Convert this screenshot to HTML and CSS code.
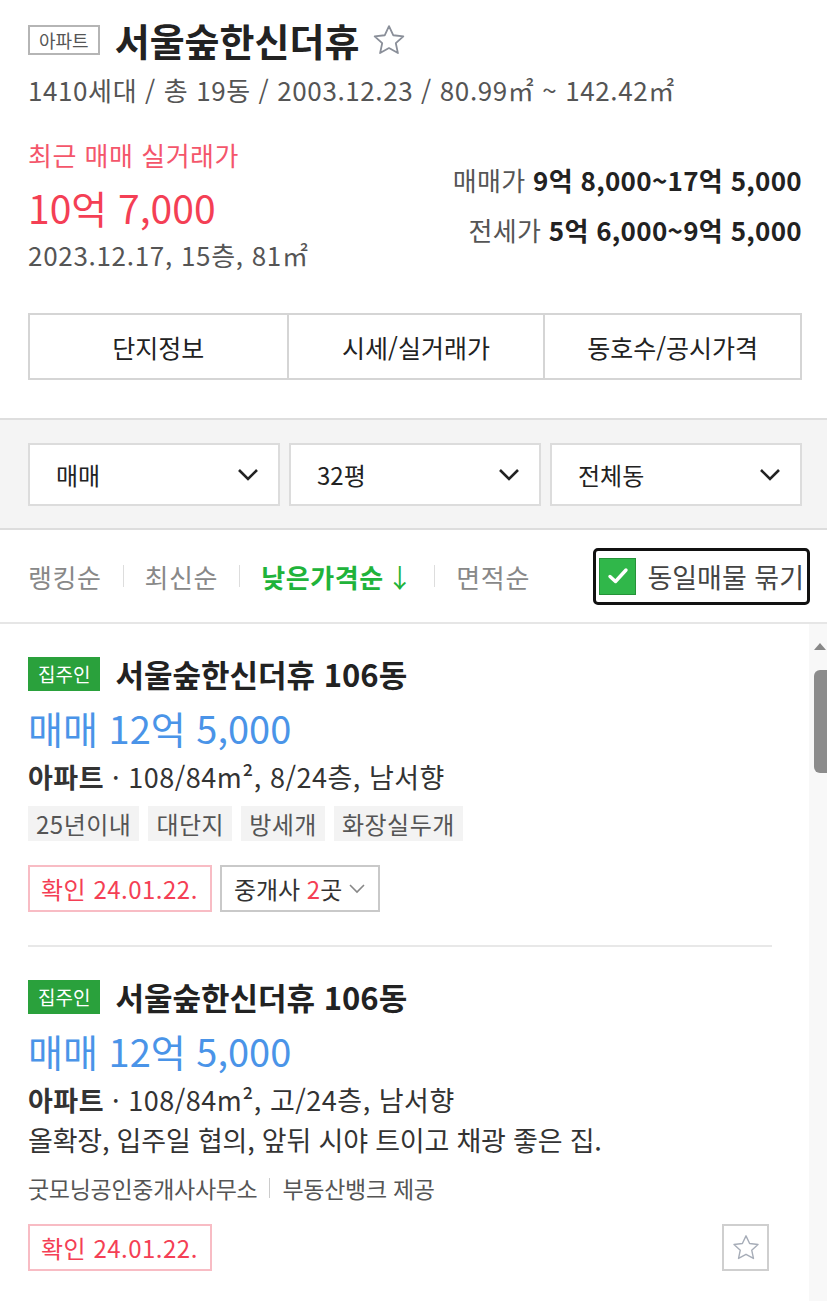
FILE: index.html
```html
<!DOCTYPE html>
<html lang="ko">
<head>
  <meta charset="UTF-8"/>
  <meta name="viewport" content="width=device-width, initial-scale=1"/>
  <title>서울숲한신더휴</title>
  <link rel="stylesheet" href="styles.css">
</head>
<body>
  <div class="complex">
    <div class="complex-title">
      <span class="type-badge">아파트</span>
      <h1>서울숲한신더휴</h1>
      <svg class="fav" width="34" height="32" viewBox="0 0 24 23">
        <path d="M12 1.5l3.1 6.6 7.2.8-5.4 4.9 1.5 7.1L12 17.3l-6.4 3.6 1.5-7.1L1.7 8.9l7.2-.8z" fill="none" stroke="#8a8f99" stroke-width="1.3" stroke-linejoin="round"/>
      </svg>
    </div>
    <p class="complex-meta">1410세대 / 총 19동 / 2003.12.23 / 80.99㎡ ~ 142.42㎡</p>

    <div class="complex-price">
      <div class="recent">
        <div class="recent-label">최근 매매 실거래가</div>
        <div class="recent-price">10억 7,000</div>
        <div class="recent-info">2023.12.17, 15층, 81㎡</div>
      </div>
      <div class="ranges">
        <div class="range"><span class="range-label">매매가</span> <strong>9억 8,000~17억 5,000</strong></div>
        <div class="range"><span class="range-label">전세가</span> <strong>5억 6,000~9억 5,000</strong></div>
      </div>
    </div>

    <!-- Complex tabs -->
    <div class="tabs">
      <div class="tab">단지정보</div>
      <div class="tab">시세/실거래가</div>
      <div class="tab">동호수/공시가격</div>
    </div>
  </div>

  <div class="filters">
    <div class="select">매매 <svg width="22" height="14" viewBox="0 0 22 14"><path d="M2 2l9 9 9-9" fill="none" stroke="#222" stroke-width="2.6"/></svg></div>
    <div class="select">32평 <svg width="22" height="14" viewBox="0 0 22 14"><path d="M2 2l9 9 9-9" fill="none" stroke="#222" stroke-width="2.6"/></svg></div>
    <div class="select">전체동 <svg width="22" height="14" viewBox="0 0 22 14"><path d="M2 2l9 9 9-9" fill="none" stroke="#222" stroke-width="2.6"/></svg></div>
  </div>

  <div class="sorts">
    <span class="sort">랭킹순</span>
    <span class="sort-sep"></span>
    <span class="sort">최신순</span>
    <span class="sort-sep"></span>
    <span class="sort active">낮은가격순<span class="arrow">↓</span></span>
    <span class="sort-sep"></span>
    <span class="sort">면적순</span>
    <label class="group-check">
      <span class="checkbox">
        <svg width="24" height="20" viewBox="0 0 24 20"><path d="M4 10.5l5.5 5L20 4" fill="none" stroke="#fff" stroke-width="3.4" stroke-linecap="round" stroke-linejoin="round"/></svg>
      </span>
      동일매물 묶기
    </label>
  </div>

  <div class="list-wrap">
    <div class="list">
      <div class="item">
        <div class="item-title"><span class="owner-badge">집주인</span>서울숲한신더휴 106동</div>
        <div class="item-price">매매 12억 5,000</div>
        <div class="item-spec"><strong>아파트</strong> · 108/84m², 8/24층, 남서향</div>
        <div class="tags">
          <span class="tag">25년이내</span>
          <span class="tag">대단지</span>
          <span class="tag">방세개</span>
          <span class="tag">화장실두개</span>
        </div>
        <div class="item-foot">
          <span class="confirm">확인 24.01.22.</span>
          <span class="agents"><span>중개사 <em>2</em>곳</span><svg width="18" height="11" viewBox="0 0 18 11"><path d="M2 2l7 7 7-7" fill="none" stroke="#888" stroke-width="1.6"/></svg></span>
        </div>
      </div>

      <div class="item">
        <div class="item-title"><span class="owner-badge">집주인</span>서울숲한신더휴 106동</div>
        <div class="item-price">매매 12억 5,000</div>
        <div class="item-spec"><strong>아파트</strong> · 108/84m², 고/24층, 남서향</div>
        <div class="item-desc">올확장, 입주일 협의, 앞뒤 시야 트이고 채광 좋은 집.</div>
        <div class="item-agency">굿모닝공인중개사사무소<span class="agency-sep"></span>부동산뱅크 제공</div>
        <div class="item-foot">
          <span class="confirm">확인 24.01.22.</span>
          <span class="star-btn">
            <svg width="28" height="27" viewBox="0 0 24 23"><path d="M12 1.5l3.1 6.6 7.2.8-5.4 4.9 1.5 7.1L12 17.3l-6.4 3.6 1.5-7.1L1.7 8.9l7.2-.8z" fill="none" stroke="#a7adb8" stroke-width="1.2" stroke-linejoin="round"/></svg>
          </span>
        </div>
      </div>
    </div>

    <div class="scrollbar">
      <span class="scroll-up"></span>
      <span class="scroll-thumb"></span>
    </div>
  </div>
</body>
</html>
```

FILE: styles.css
```css
body{
  margin: 0;
  font-family: "Noto Sans CJK KR", "Noto Sans", sans-serif;
  color: #222;
  background: #fff;
  width: 827px;
  overflow: hidden;
}
.complex{
  padding: 18px 25px 38px 28px;
  border-bottom: 2px solid #dedede;
}
.complex-title{
  display: flex;
  align-items: center;
  height: 44px;
}
.type-badge{
  border: 2px solid #b5b5b5;
  color: #555;
  font-size: 18px;
  line-height: 26px;
  padding: 0 9px;
  margin-right: 15px;
}
h1{
  margin: 0;
  font-size: 38px;
  font-weight: 700;
  line-height: 44px;
}
.fav{
  margin-left: 13px;
}
.complex-meta{
  margin: 11px 0 0;
  font-size: 26px;
  line-height: 34px;
  color: #555;
  letter-spacing: 0.6px;
}
.complex-price{
  display: flex;
  justify-content: space-between;
  margin-top: 31px;
}
.recent-label{
  font-size: 26px;
  line-height: 34px;
  color: #f4566b;
  letter-spacing: 0.5px;
}
.recent-price{
  font-size: 39px;
  line-height: 48px;
  color: #f43f55;
  margin-top: 11px;
}
.recent-info{
  font-size: 26px;
  line-height: 34px;
  color: #555;
  letter-spacing: 0.7px;
  margin-top: 7px;
}
.ranges{
  text-align: right;
  padding-top: 25px;
}
.range{
  font-size: 26px;
  line-height: 34px;
  letter-spacing: 0.3px;
  margin-bottom: 16px;
}
.range-label{
  color: #555;
}
.range strong{
  font-weight: 700;
  color: #222;
}
.tabs{
  display: grid;
  grid-template-columns: 1fr 1fr 1fr;
  margin-top: 41px;
  border: 2px solid #d5d5d5;
}
.tab{
  height: 63px;
  display: flex;
  align-items: center;
  justify-content: center;
  font-size: 25px;
  color: #222;
}
.tab + .tab{
  border-left: 2px solid #d5d5d5;
}
.filters{
  display: grid;
  grid-template-columns: 1fr 1fr 1fr;
  gap: 9px;
  background: #f4f4f4;
  padding: 23px 25px 22px 28px;
  border-bottom: 2px solid #ddd;
}
.select{
  height: 59px;
  background: #fff;
  border: 2px solid #dcdcdc;
  display: flex;
  align-items: center;
  justify-content: space-between;
  padding: 0 19px 0 26px;
  font-size: 24px;
  color: #222;
}
.sorts{
  display: flex;
  align-items: center;
  height: 92px;
  padding: 0 17px 0 28px;
  border-bottom: 2px solid #e6e6e6;
}
.sort{
  font-size: 26px;
  color: #888;
  letter-spacing: 0.6px;
}
.sort.active{
  color: #20b33a;
  font-weight: 700;
}
.sort .arrow{
  font-weight: 400;
  margin-left: 3px;
}
.sort-sep{
  width: 1px;
  height: 22px;
  background: #ddd;
  margin: 0 21px;
}
.group-check{
  margin-left: auto;
  display: flex;
  align-items: center;
  border: 3px solid #111;
  border-radius: 5px;
  height: 51px;
  padding: 0 3px 0 3px;
  font-size: 27px;
  color: #444;
}
.checkbox{
  width: 35px;
  height: 35px;
  background: #30b74a;
  border: 1px solid #259238;
  display: flex;
  align-items: center;
  justify-content: center;
  margin-right: 11px;
}
.list-wrap{
  display: flex;
}
.list{
  flex: 1;
  padding: 0 37px 0 28px;
}
.item{
  padding: 31px 0 33px;
  border-bottom: 2px solid #e8e8e8;
}
.item:last-child{
  border-bottom: none;
}
.item-title{
  display: flex;
  align-items: center;
  font-size: 31px;
  font-weight: 700;
  line-height: 38px;
}
.owner-badge{
  background: #2aa13c;
  color: #fff;
  font-size: 19px;
  font-weight: 400;
  line-height: 34px;
  padding: 0 10px;
  margin-right: 15px;
}
.item-price{
  font-size: 38px;
  line-height: 48px;
  color: #4a94e8;
  margin-top: 11px;
}
.item-spec{
  font-size: 27px;
  line-height: 34px;
  color: #333;
  margin-top: 8px;
  letter-spacing: 0.5px;
}
.item-spec strong{
  font-weight: 700;
}
.tags{
  display: flex;
  gap: 9px;
  margin-top: 12px;
}
.tag{
  background: #f3f3f3;
  color: #555;
  font-size: 24px;
  line-height: 35px;
  padding: 0 8px;
  letter-spacing: 0.5px;
}
.item-desc{
  font-size: 27px;
  line-height: 34px;
  color: #333;
  margin-top: 6px;
  letter-spacing: -0.2px;
}
.item-agency{
  display: flex;
  align-items: center;
  font-size: 23px;
  line-height: 32px;
  color: #555;
  margin-top: 15px;
  letter-spacing: -0.3px;
}
.agency-sep{
  width: 1px;
  height: 20px;
  background: #ccc;
  margin: 0 12px;
}
.item-foot{
  display: flex;
  align-items: center;
  gap: 8px;
  margin-top: 24px;
}
.item-agency + .item-foot{
  margin-top: 20px;
}
.confirm{
  border: 2px solid #f8bcc4;
  color: #f43f55;
  font-size: 24px;
  line-height: 43px;
  padding: 0 12px 0 11px;
  letter-spacing: 0.5px;
}
.agents{
  border: 2px solid #c9c9c9;
  color: #333;
  font-size: 24px;
  line-height: 43px;
  padding: 0 12px;
  display: flex;
  align-items: center;
  gap: 6px;
}
.agents em{
  font-style: normal;
  color: #f43f55;
}
.star-btn{
  margin-left: auto;
  margin-right: 3px;
  width: 43px;
  height: 43px;
  border: 2px solid #cfcfcf;
  display: flex;
  align-items: center;
  justify-content: center;
}
.scrollbar{
  width: 18px;
  background: #f8f8f8;
  display: flex;
  flex-direction: column;
  align-items: flex-end;
  padding-top: 19px;
}
.scroll-up{
  width: 0;
  height: 0;
  border-left: 6px solid transparent;
  border-right: 6px solid transparent;
  border-bottom: 7px solid #888;
  margin-right: 1px;
}
.scroll-thumb{
  width: 13px;
  height: 103px;
  background: #8c8c8c;
  border-radius: 6px 0 0 6px;
  margin-top: 20px;
}
```
